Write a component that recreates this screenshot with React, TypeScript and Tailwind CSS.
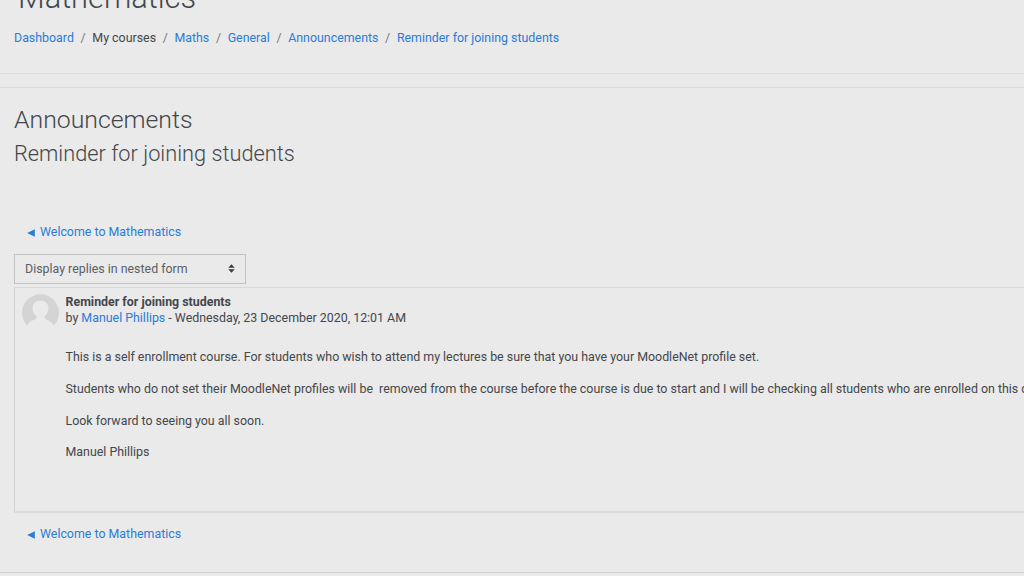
import type { ReactNode } from "react";

const crumbs = [
  { label: "Dashboard", link: true },
  { label: "My courses", link: false },
  { label: "Maths", link: true },
  { label: "General", link: true },
  { label: "Announcements", link: true },
  { label: "Reminder for joining students", link: true },
];

function Link({ children }: { children: ReactNode }) {
  return (
    <a href="#" className="text-[#2a7cd6]">
      {children}
    </a>
  );
}

function PreviousActivity() {
  return (
    <a href="#" className="flex h-5 items-center pl-[13px] text-[#2a7cd6]">
      <svg viewBox="0 0 8 8" className="mr-[5px] mt-px h-2 w-2" fill="currentColor">
        <path d="M0.2 4 7.8 0.3v7.4z" />
      </svg>
      Welcome to Mathematics
    </a>
  );
}

function Avatar() {
  return (
    <svg viewBox="0 0 38 38" className="mt-[5px] h-[38px] w-[38px] shrink-0">
      <path
        d="M5.300 32.800A18.500 18.500 0 1 1 31.700 32.800C31 30.800 29.500 29 27.500 28L23.500 26C22.300 25 22.500 23.500 23.300 22.500 25.300 20.500 26.500 18 26.500 15.500 26.500 10.500 23 7.500 18.500 7.500S10.500 10.500 10.500 15.500c0 2.500 1.200 5 3.200 7 .8 1 1 2.500-.2 3.500L9.500 28C7.500 29 6 30.800 5.300 32.800z"
        fill="#d4d4d4"
      />
    </svg>
  );
}

export default function App() {
  return (
    <div className="h-[576px] w-[1024px] overflow-hidden whitespace-nowrap bg-[#eaeaea] font-['Roboto',sans-serif] text-[12.4px] text-[#43474b]">
      <header className="flex h-[74px] flex-col border-b border-[#dcdcdc] px-3.5">
        <h1 className="-mt-[25px] h-[53px] shrink-0 pl-1 text-[30.8px] font-light leading-[45px]">Mathematics</h1>
        <nav className="flex h-5 items-center">
          {crumbs.map((crumb, index) => (
            <span key={crumb.label} className="flex">
              {index > 0 && <span className="w-[18.4px] text-center text-[#74787c]">/</span>}
              {crumb.link ? <Link>{crumb.label}</Link> : crumb.label}
            </span>
          ))}
        </nav>
      </header>

      <main className="mt-[13px] h-[486px] border-y border-t-[#dcdcdc] border-b-[#d0d0d0] pl-3.5">
        <h2 className="pt-4 text-[24.8px] font-light leading-8">Announcements</h2>
        <h3 className="pt-0.5 text-[21.75px] font-light leading-8">Reminder for joining students</h3>
        <div className="pt-[52px]">
          <PreviousActivity />
        </div>
        <button className="mt-3 flex h-[30px] w-[232px] items-center justify-between border border-[#bfc3c6] px-2.5 text-[#5b5f63]">
          Display replies in nested form
          <svg viewBox="0 0 7 9" className="-mt-px h-[9px] w-[7px]" fill="#3a3d40">
            <path d="M0.300 3.700 3.500 0.200 6.700 3.700zM0.300 5.300 3.500 8.800 6.700 5.300z" />
          </svg>
        </button>
        <article className="mt-[3px] flex h-[226px] border-b-2 border-l border-t border-t-[#d8d9da] border-b-[#dcdcdc] border-l-[#d0d2d4] pl-[7px]">
          <Avatar />
          <div className="pl-[5.5px] pt-[6px]">
            <h4 className="font-bold leading-4">Reminder for joining students</h4>
            <p className="leading-4">
              by <Link>Manuel Phillips</Link> - Wednesday, 23 December 2020, 12:01 AM
            </p>
            <div className="flex flex-col gap-[11.8px] pt-[21px] leading-5">
              <p>
                This is a self enrollment course. For students who wish to attend my lectures be sure that you have your
                MoodleNet profile set.
              </p>
              <p>
                Students who do not set their MoodleNet profiles will be&nbsp; removed from the course before the course
                is due to start and I will be checking all students who are enrolled on this course
              </p>
              <p>Look forward to seeing you all soon.</p>
              <p>Manuel Phillips</p>
            </div>
          </div>
        </article>
        <div className="pt-[11px]">
          <PreviousActivity />
        </div>
      </main>
    </div>
  );
}
